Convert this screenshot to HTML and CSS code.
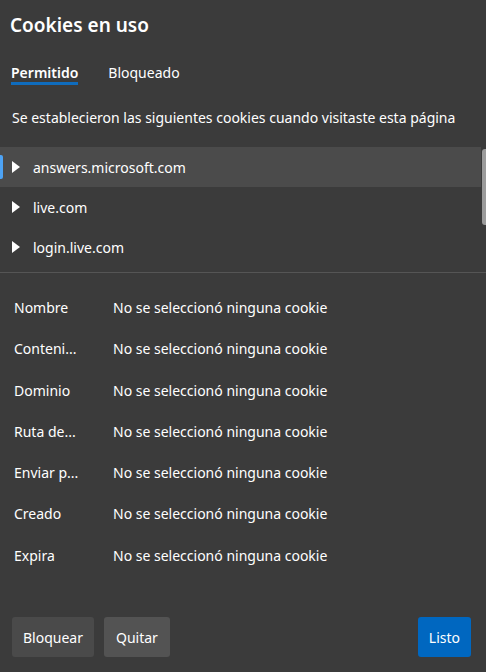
FILE: index.html
```html
<!DOCTYPE html>
<html lang="es">
<head>
<meta charset="utf-8">
<link rel="stylesheet" href="styles.css">
</head>
<body>
<div class="dialog">
  <h1 class="title">Cookies en uso</h1>
  <div class="tabs">
    <span class="tab active">Permitido</span>
    <span class="tab">Bloqueado</span>
  </div>
  <p class="desc">Se establecieron las siguientes cookies cuando visitaste esta página</p>
  <div class="list">
    <div class="row selected"><span class="caret"></span><span class="domain">answers.microsoft.com</span></div>
    <div class="row"><span class="caret"></span><span class="domain">live.com</span></div>
    <div class="row"><span class="caret"></span><span class="domain">login.live.com</span></div>
    <div class="scrollbar"></div>
  </div>
  <div class="details">
    <div class="drow"><span class="label">Nombre</span><span class="value">No se seleccionó ninguna cookie</span></div>
    <div class="drow"><span class="label" title="Contenido">Conteni...</span><span class="value">No se seleccionó ninguna cookie</span></div>
    <div class="drow"><span class="label">Dominio</span><span class="value">No se seleccionó ninguna cookie</span></div>
    <div class="drow"><span class="label" title="Ruta de acceso">Ruta de...</span><span class="value">No se seleccionó ninguna cookie</span></div>
    <div class="drow"><span class="label" title="Enviar para">Enviar p...</span><span class="value">No se seleccionó ninguna cookie</span></div>
    <div class="drow"><span class="label">Creado</span><span class="value">No se seleccionó ninguna cookie</span></div>
    <div class="drow"><span class="label">Expira</span><span class="value">No se seleccionó ninguna cookie</span></div>
  </div>
  <div class="footer">
    <button class="btn">Bloquear</button>
    <button class="btn alt">Quitar</button>
    <button class="btn primary">Listo</button>
  </div>
</div>
</body>
</html>
```
FILE: styles.css
```css
html, body {
  margin: 0;
  padding: 0;
  background: #3b3b3b;
}
body {
  font-family: "Noto Sans", "Open Sans", sans-serif;
  color: #ffffff;
  font-size: 14px;
  width: 486px;
  height: 672px;
  overflow: hidden;
}
.dialog {
  display: flex;
  flex-direction: column;
  height: 672px;
}
.title {
  margin: 0;
  padding: 12px 0 0 10px;
  font-size: 19px;
  font-weight: 600;
  line-height: 26px;
  height: 29px;
}
.tabs {
  display: flex;
  gap: 30px;
  padding: 22px 0 0 11px;
  height: 32px;
}
.tab {
  font-size: 14px;
  line-height: 20px;
  height: 20px;
}
.tab.active {
  font-weight: 600;
  border-bottom: 3px solid #0f6cbd;
  height: 19px;
}
.desc {
  margin: 0;
  padding: 13px 0 0 12px;
  line-height: 20px;
  height: 39px;
}
.list {
  position: relative;
  border-bottom: 1px solid #555555;
  padding-bottom: 5px;
}
.row {
  position: relative;
  display: flex;
  align-items: center;
  height: 40px;
  padding-left: 12px;
}
.row.selected {
  background: #4b4b4b;
  margin-right: 5px;
}
.row.selected::before {
  content: "";
  position: absolute;
  left: 0;
  top: 8px;
  width: 3px;
  height: 24px;
  background: #4da3f5;
  border-radius: 0 2px 2px 0;
}
.caret {
  width: 0;
  height: 0;
  border-top: 6.5px solid transparent;
  border-bottom: 6.5px solid transparent;
  border-left: 8px solid #ffffff;
  margin-right: 13px;
}
.scrollbar {
  position: absolute;
  right: 0;
  top: 2px;
  width: 4px;
  height: 76px;
  background: #9b9b9b;
  border-radius: 3px 0 0 3px;
}
.details {
  display: flex;
  flex-direction: column;
  padding-top: 25px;
}
.drow {
  display: flex;
  height: 41.3px;
  line-height: 20px;
}
.label {
  width: 86px;
  padding-left: 14px;
  margin-right: 13px;
  white-space: nowrap;
}
.footer {
  margin-top: auto;
  display: flex;
  gap: 10px;
  padding: 0 15px 15px 12px;
}
.btn {
  font-family: inherit;
  font-size: 14px;
  color: #ffffff;
  background: #4a4a4a;
  border: none;
  border-radius: 3px;
  height: 40px;
  padding: 0 11px;
}
.btn.alt {
  background: #535353;
  padding: 0 12px;
}
.btn.primary {
  margin-left: auto;
  background: #0067c0;
}
```
